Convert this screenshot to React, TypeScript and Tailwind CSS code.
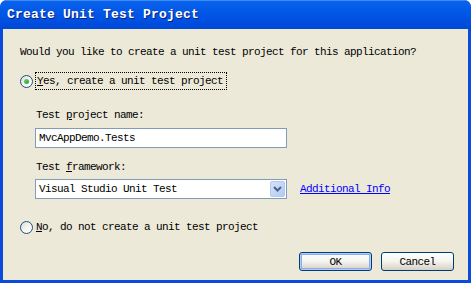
import React from 'react';

const mono = "font-['Liberation_Mono','DejaVu_Sans_Mono',monospace] text-[11px] leading-[12px] tracking-[-0.6px] text-black";

function Radio({ checked }: { checked?: boolean }) {
  return (
    <span className="relative flex h-[13px] w-[13px] shrink-0 items-center justify-center rounded-full border border-[#1C5180] bg-gradient-to-br from-[#DCDCD7] via-[#F4F4F0] to-white">
      {checked && (
        <span className="h-[5px] w-[5px] rounded-full bg-gradient-to-br from-[#6ED36E] to-[#21A121]" />
      )}
    </span>
  );
}

function XpButton({ label, focused }: { label: string; focused?: boolean }) {
  return (
    <button
      className={`flex h-[19px] w-[73px] items-center justify-center rounded-[3px] border border-[#003C74] bg-gradient-to-b from-white via-[#F3F3EF] to-[#D6D0C5] ${mono} ${
        focused ? 'shadow-[inset_0_0_0_1px_#B2CDF9,inset_0_0_0_2px_#89ADE4]' : ''
      }`}
    >
      {label}
    </button>
  );
}

export default function App() {
  return (
    <div className="flex h-[283px] w-[471px] flex-col overflow-hidden rounded-t-[7px] bg-[#0A4BDB]">
      {/* Title bar */}
      <div className="flex h-[29px] shrink-0 items-center border-t border-[#3D8CF7] bg-gradient-to-b from-[#0A62EC] via-[#0055E5] to-[#0048D8] pl-[7px]">
        <span className="font-['Liberation_Mono','DejaVu_Sans_Mono',monospace] text-[13px] font-bold tracking-[0.2px] text-white [text-shadow:1px_1px_0_#0A1E80]">
          Create Unit Test Project
        </span>
      </div>

      {/* Body */}
      <div className="mx-[3px] mb-[3px] flex flex-1 flex-col bg-[#ECE9D8] pl-[17px] pr-[14px] pt-[17px]">
        <p className={mono}>Would you like to create a unit test project for this application?</p>

        <div className="mt-[14px] flex h-[18px] items-center">
          <Radio checked />
          <span className={`ml-[2px] flex h-[18px] items-center border border-dotted border-black pl-[1px] pr-[3px] ${mono}`}>
            <span className="underline">Y</span>es, create a unit test project
          </span>
        </div>

        <div className="ml-[15px] flex flex-col">
          <p className={`mt-[19px] pl-[1px] ${mono}`}>
            Test <span className="underline">p</span>roject name:
          </p>
          <div className={`mt-[7px] flex h-[20px] w-[252px] items-center border border-[#7F9DB9] bg-white pl-[3px] ${mono}`}>
            MvcAppDemo.Tests
          </div>

          <p className={`mt-[13px] pl-[1px] ${mono}`}>
            Test <span className="underline">f</span>ramework:
          </p>
          <div className="mt-[6px] flex items-center">
            <div className={`flex h-[20px] w-[252px] items-center justify-between border border-[#7F9DB9] bg-white pl-[3px] pr-px ${mono}`}>
              <span>Visual Studio Unit Test</span>
              <span className="flex h-[16px] w-[15px] items-center justify-center rounded-[2px] border border-[#B5C8F2] bg-gradient-to-br from-[#D6E2FC] to-[#B2C9F6]">
                <svg width="9" height="6" viewBox="0 0 9 6">
                  <path d="M1 1 L4.5 4.5 L8 1" stroke="#4D6185" strokeWidth="2" fill="none" />
                </svg>
              </span>
            </div>
            <a className={`ml-[13px] underline ${mono} !text-[#0000FF]`}>Additional Info</a>
          </div>
        </div>

        <div className="mt-[19px] flex h-[18px] items-center">
          <Radio />
          <span className={`ml-[3px] ${mono}`}>
            <span className="underline">N</span>o, do not create a unit test project
          </span>
        </div>

        <div className="mt-[16px] flex justify-end gap-[9px]">
          <XpButton label="OK" focused />
          <XpButton label="Cancel" />
        </div>
      </div>
    </div>
  );
}
